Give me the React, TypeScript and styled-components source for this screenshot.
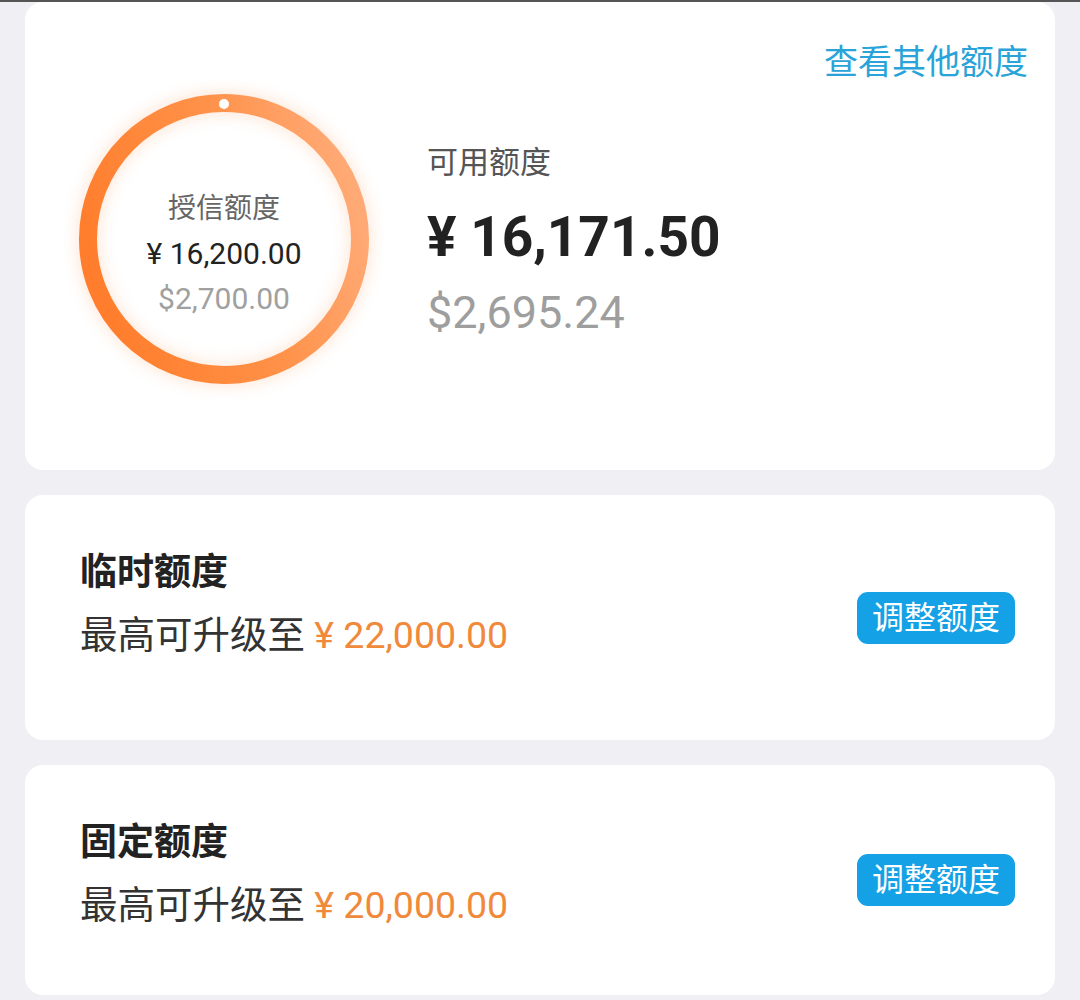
import * as React from "react";
import styled, { createGlobalStyle } from "styled-components";

const GlobalStyle = createGlobalStyle`
  html, body {
    margin: 0;
    padding: 0;
    background: #efeff4;
    font-family: Roboto, "Noto Sans CJK SC", sans-serif;
  }
`;

const Page = styled("div")`
  border-top: 2px solid #555555;
  padding: 0 25px 40px;
  display: flex;
  flex-direction: column;
  gap: 25px;
`;

const Card = styled("div")`
  background: #ffffff;
  border-radius: 18px;
`;

const SummaryCard = styled(Card)`
  height: 468px;
  box-sizing: border-box;
  padding: 39px 27px 0 54px;
  display: flex;
  flex-direction: column;
`;

const LinkRow = styled("div")`
  display: flex;
  justify-content: flex-end;
`;

const OtherLink = styled("a")`
  font-size: 34px;
  line-height: 42px;
  color: #2aa4d8;
  cursor: pointer;
`;

const SummaryRow = styled("div")`
  display: flex;
  align-items: center;
  gap: 58px;
  margin-top: 11px;
`;

const Ring = styled("div")`
  position: relative;
  width: 290px;
  height: 290px;
  box-sizing: border-box;
  padding-top: 28px;
  flex-shrink: 0;
  display: flex;
  flex-direction: column;
  align-items: center;
  justify-content: center;

  svg {
    position: absolute;
    left: -15px;
    top: -15px;
  }
`;

const RingLabel = styled("div")`
  position: relative;
  font-size: 28px;
  line-height: 45px;
  color: #666666;
`;

const RingAmount = styled("div")`
  position: relative;
  font-size: 30px;
  line-height: 45px;
  color: #222222;
`;

const RingUsd = styled("div")`
  position: relative;
  font-size: 30px;
  line-height: 45px;
  color: #a0a0a0;
`;

const Available = styled("div")`
  display: flex;
  flex-direction: column;
`;

const AvailableLabel = styled("div")`
  font-size: 31px;
  line-height: 48px;
  color: #555555;
`;

const AvailableAmount = styled("div")`
  font-size: 55px;
  font-weight: 700;
  line-height: 100px;
  color: #222222;
`;

const AvailableUsd = styled("div")`
  font-size: 45px;
  line-height: 52px;
  color: #9e9e9e;
`;

interface LimitCardProps {
  readonly $height: number;
}

const LimitCard = styled(Card)<LimitCardProps>`
  height: ${({ $height }) => $height}px;
  box-sizing: border-box;
  padding: 0 40px 0 55px;
  display: flex;
  align-items: center;
  justify-content: space-between;
`;

const LimitInfo = styled("div")`
  align-self: flex-start;
  margin-top: 52px;
  display: flex;
  flex-direction: column;
  gap: 10px;
`;

const LimitTitle = styled("div")`
  font-size: 37px;
  font-weight: 700;
  line-height: 52px;
  color: #222222;
`;

const LimitLine = styled("div")`
  font-size: 37.5px;
  line-height: 52px;
  color: #333333;
`;

const Highlight = styled("span")`
  color: #f0893a;
`;

const AdjustButton = styled("button")`
  border: none;
  background: #14a1e5;
  color: #ffffff;
  font-family: inherit;
  font-size: 32px;
  line-height: 52px;
  padding: 0 15px;
  border-radius: 11px;
  cursor: pointer;
`;

const RingGraphic = (): JSX.Element => (
  <svg width="320" height="320" viewBox="0 0 320 320">
    <defs>
      <linearGradient id="ringGrad" x1="0" y1="0.6" x2="1" y2="0.3">
        <stop offset="0" stopColor="#ff7d2c" />
        <stop offset="0.55" stopColor="#ff9148" />
        <stop offset="1" stopColor="#ffab78" />
      </linearGradient>
      <filter id="ringGlow" x="-20%" y="-20%" width="140%" height="140%">
        <feGaussianBlur stdDeviation="7" />
      </filter>
    </defs>
    <circle cx="160" cy="160" r="136" fill="none" stroke="#ffb07a" strokeOpacity="0.25" strokeWidth="26" filter="url(#ringGlow)" />
    <circle cx="160" cy="160" r="136" fill="none" stroke="url(#ringGrad)" strokeWidth="18" />
    <circle cx="160" cy="25" r="5" fill="#ffffff" />
  </svg>
);

interface LimitProps {
  readonly title: string;
  readonly amount: string;
  readonly height: number;
}

const LimitItem = ({ title, amount, height }: LimitProps): JSX.Element => (
  <LimitCard $height={height}>
    <LimitInfo>
      <LimitTitle>{title}</LimitTitle>
      <LimitLine>
        最高可升级至 <Highlight>¥ {amount}</Highlight>
      </LimitLine>
    </LimitInfo>
    <AdjustButton>调整额度</AdjustButton>
  </LimitCard>
);

export default class App extends React.Component {
  render(): JSX.Element {
    return (
      <>
        <GlobalStyle />
        <Page>
          <SummaryCard>
            <LinkRow>
              <OtherLink>查看其他额度</OtherLink>
            </LinkRow>
            <SummaryRow>
              <Ring>
                <RingGraphic />
                <RingLabel>授信额度</RingLabel>
                <RingAmount>¥ 16,200.00</RingAmount>
                <RingUsd>$2,700.00</RingUsd>
              </Ring>
              <Available>
                <AvailableLabel>可用额度</AvailableLabel>
                <AvailableAmount>¥ 16,171.50</AvailableAmount>
                <AvailableUsd>$2,695.24</AvailableUsd>
              </Available>
            </SummaryRow>
          </SummaryCard>
          <LimitItem title="临时额度" amount="22,000.00" height={245} />
          <LimitItem title="固定额度" amount="20,000.00" height={230} />
        </Page>
      </>
    );
  }
}
